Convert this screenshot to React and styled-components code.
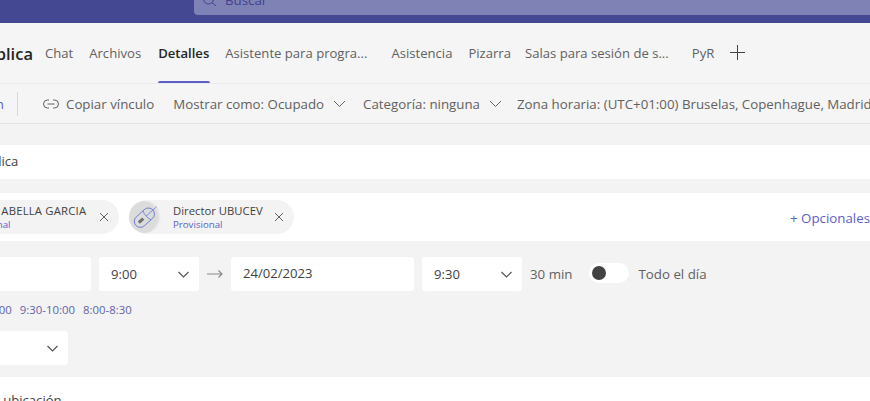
import React from "react";
import styled, { createGlobalStyle } from "styled-components";

const Global = createGlobalStyle`
  html, body { margin: 0; padding: 0; background: #f5f5f5; }
  body { font-family: "Open Sans", "Noto Sans", "Liberation Sans", sans-serif; color: #424242; }
`;

const Page = styled.div`
  width: 870px; height: 401px; overflow: hidden; background: #f5f5f5;
`;
const Canvas = styled.div`
  width: 1100px; margin-left: -100px;
`;
const TopBar = styled.div`
  height: 23px; background: #444791; padding-left: 294px; box-sizing: border-box;
`;
const SearchBox = styled.div`
  height: 15px; background: #7f82b5; border-radius: 0 0 4px 4px; display: flex; align-items: flex-start;
  padding-left: 9px; gap: 8px; overflow: hidden; color: #3f4291; font-size: 13.3px; line-height: 18px;
  svg { flex: none; }
  span { margin-top: -9px; }
`;
const TabBar = styled.div`
  height: 60px; padding-left: 90px; display: flex; align-items: stretch; gap: 16px;
  border-bottom: 1px solid #ebebeb;
`;
const Title = styled.div`
  font-size: 16.5px; font-weight: 600; color: #242424; display: flex; align-items: center;
  width: 88px; justify-content: flex-end; margin-left: -45px; margin-right: -4px;
`;
const Tab = styled.div`
  position: relative; font-size: 13.1px; color: ${p => p.$active ? "#242424" : "#616161"};
  font-weight: ${p => p.$active ? 600 : 400}; display: flex; align-items: center; white-space: nowrap;
  margin-right: ${p => p.$shift || 0}px;
  ${p => p.$active && `&::after { content: ""; position: absolute; left: 0; right: -1px; bottom: 0; height: 2px; background: #5b5fc7; border-radius: 2px 2px 0 0; }`}
`;
const AddTab = styled.div`
  display: flex; align-items: center; color: #424242; margin-bottom: 2px;
`;
const ToolBar = styled.div`
  height: 39px; display: flex; align-items: center; white-space: nowrap; font-size: 13.3px; color: #616161;
  border-bottom: 1px solid #e3e3e3;
`;
const ActionSlot = styled.div`
  width: 104px; flex: none; display: flex; justify-content: flex-end;
`;
const ClippedAction = styled.span`
  color: #5b5fc7; flex: none;
`;
const Divider = styled.div`
  width: 1px; height: 24px; background: #d9d9d9; margin: 0 25px 0 13px; flex: none;
`;
const ToolItem = styled.div`
  display: flex; align-items: center; gap: ${p => p.$gap || 9}px; margin-right: ${p => p.$after || 0}px; flex: none;
`;
const Form = styled.div`
  background: #f3f3f3; padding-top: 21px; height: 300px;
`;
const SubjectRow = styled.div`
  height: 34px; background: #fff; display: flex; align-items: center; font-size: 13.1px; color: #424242; padding: 0 0 2px 20px; box-sizing: border-box;
`;
const AttendeeRow = styled.div`
  height: 48px; margin-top: 14px; background: #fff; display: flex; align-items: center; gap: 10px;
  position: relative;
`;
const Chip = styled.div`
  height: 34px; width: ${p => p.$w}px; box-sizing: border-box; border-radius: 17px; background: #f3f3f3; display: flex; align-items: center; flex: none;
  padding-right: 10px;
`;
const Avatar = styled.div`
  width: 32px; height: 32px; border-radius: 50%; flex: none; overflow: hidden;
  background: radial-gradient(circle at 40% 50%, #dcdcdc 0 62%, #eeeeee 74%, #fff 100%);
`;
const ChipText = styled.div`
  display: flex; flex-direction: column; width: ${p => p.$w}px; flex: none; margin-left: auto; margin-right: 11px;
`;
const ChipName = styled.span`
  font-size: 11.3px; color: #424242; white-space: nowrap; line-height: 15px; margin-top: -1px;
  letter-spacing: ${p => p.$spaced ? "0.2px" : "0"};
`;
const ChipStatus = styled.span`
  font-size: 9.7px; color: #5b5fc7; line-height: 13px;
`;
const Optional = styled.span`
  position: absolute; left: 890px; top: 16px; color: #5b5fc7; font-size: 13.3px; white-space: nowrap;
`;
const DateRow = styled.div`
  display: flex; align-items: center; margin-top: 16px; gap: 8px; height: 34px;
`;
const Field = styled.div`
  background: #fff; border-radius: 3px; height: 34px; width: ${p => p.$w}px; box-sizing: border-box; flex: none;
  display: flex; align-items: center; justify-content: space-between; padding: 0 10px 0 12px; font-size: 13.1px; color: #424242;
`;
const DateValue = styled.span`
  margin-top: -2px;
`;
const Muted = styled.span`
  font-size: 13.3px; color: #616161; white-space: nowrap; margin-left: ${p => p.$left || 0}px;
`;
const Toggle = styled.div`
  width: 40px; height: 20px; border-radius: 10px; background: #fff; position: relative; margin: 0 0 2px 9px; flex: none;
  &::after { content: ""; position: absolute; left: 3px; top: 3px; width: 14px; height: 14px; border-radius: 50%; background: #424242; }
`;
const Links = styled.div`
  display: flex; gap: 8px; margin-top: 9px; height: 18px; align-items: center; font-size: 11.4px; color: #6264a7; padding-left: 63px; white-space: nowrap;
`;
const SelectRow = styled.div`
  margin-top: 13px; height: 32px; display: flex;
`;
const LocationRow = styled.div`
  margin-top: 14px; background: #fff; height: 60px; font-size: 13.1px; color: #424242; padding: 14px 0 0 52px; box-sizing: border-box; white-space: nowrap;
`;

const Chevron = () => (
  <svg width="13" height="8" viewBox="0 0 13 8" fill="none"><path d="M1 1l5.5 5.5L12 1" stroke="#616161" strokeWidth="1" /></svg>
);
const FieldChevron = () => (
  <svg width="11" height="7" viewBox="0 0 11 7" fill="none"><path d="M.5 1l5 5 5-5" stroke="#555" strokeWidth="1.2" /></svg>
);
const Close = () => (
  <svg width="10" height="10" viewBox="0 0 10 10" fill="none"><path d="M1 1l8 8M9 1l-8 8" stroke="#616161" strokeWidth="1" /></svg>
);

export default function App() {
  return (
    <Page>
      <Global />
      <Canvas>
        <TopBar>
          <SearchBox>
            <svg width="14" height="6" viewBox="0 0 14 6" fill="none"><circle cx="5.5" cy="-1" r="5" stroke="#3f4291" /><path d="M9 2.5l4 3.5" stroke="#3f4291" /></svg>
            <span>Buscar</span>
          </SearchBox>
        </TopBar>
        <TabBar>
          <Title>Pública</Title>
          <Tab>Chat</Tab>
          <Tab $shift={1}>Archivos</Tab>
          <Tab $active>Detalles</Tab>
          <Tab $shift={8}>Asistente para progra...</Tab>
          <Tab>Asistencia</Tab>
          <Tab $shift={-2}>Pizarra</Tab>
          <Tab $shift={7}>Salas para sesión de s...</Tab>
          <Tab>PyR</Tab>
          <AddTab>
            <svg width="15" height="15" viewBox="0 0 15 15" fill="none"><path d="M7.5 0v15M0 7.5h15" stroke="#424242" strokeWidth="1" /></svg>
          </AddTab>
        </TabBar>
        <ToolBar>
          <ActionSlot><ClippedAction>Unirse a reunión</ClippedAction></ActionSlot>
          <Divider />
          <ToolItem $gap={7} $after={19}>
            <svg width="16" height="10" viewBox="0 0 16 10" fill="none"><path d="M6 1H4.5a4 4 0 000 8H6M10 1h1.5a4 4 0 010 8H10M4.5 5h7" stroke="#616161" /></svg>
            <span>Copiar vínculo</span>
          </ToolItem>
          <ToolItem $after={17}><span>Mostrar como: Ocupado</span><Chevron /></ToolItem>
          <ToolItem $after={15}><span>Categoría: ninguna</span><Chevron /></ToolItem>
          <ToolItem><span>Zona horaria: (UTC+01:00) Bruselas, Copenhague, Madrid, París</span></ToolItem>
        </ToolBar>
        <Form>
          <SubjectRow>Reunión pública</SubjectRow>
          <AttendeeRow>
            <Chip $w={219}>
              <Avatar />
              <ChipText $w={127}><ChipName $spaced>MARIO ABELLA GARCIA</ChipName><ChipStatus>Provisional</ChipStatus></ChipText>
              <Close />
            </Chip>
            <Chip $w={165}>
              <Avatar>
                <svg width="32" height="32" viewBox="0 0 32 32" fill="none">
                  <g transform="rotate(48 15 17)" stroke="#5b6fd0">
                    <rect x="9" y="5" width="12" height="23" rx="6" strokeWidth="0.8" />
                    <path d="M9 13c3 1.5 9 1.5 12 0M15 5v9" strokeWidth="0.7" />
                    <path d="M15 -1v6" strokeWidth="0.6" />
                    <path d="M13.5 18h3v6h-3z" fill="#707070" stroke="none" />
                  </g>
                </svg>
              </Avatar>
              <ChipText $w={90}><ChipName>Director UBUCEV</ChipName><ChipStatus>Provisional</ChipStatus></ChipText>
              <Close />
            </Chip>
            <Optional>+ Opcionales</Optional>
          </AttendeeRow>
          <DateRow>
            <Field $w={191}><DateValue>24/02/2023</DateValue></Field>
            <Field $w={100}><span>9:00</span><FieldChevron /></Field>
            <svg width="16" height="10" viewBox="0 0 16 10" fill="none"><path d="M0 5h15M11.5 1.5l3.5 3.5-3.5 3.5" stroke="#8a8a8a" strokeWidth="1.2" /></svg>
            <Field $w={183}><DateValue>24/02/2023</DateValue></Field>
            <Field $w={100}><span>9:30</span><FieldChevron /></Field>
            <Muted>30 min</Muted>
            <Toggle />
            <Muted $left={1}>Todo el día</Muted>
          </DateRow>
          <Links>
            <span>8:30-9:00</span>
            <span>9:30-10:00</span>
            <span>8:00-8:30</span>
          </Links>
          <SelectRow>
            <Field $w={168}><span>No se repite</span><FieldChevron /></Field>
          </SelectRow>
          <LocationRow>Agregar ubicación</LocationRow>
        </Form>
      </Canvas>
    </Page>
  );
}
